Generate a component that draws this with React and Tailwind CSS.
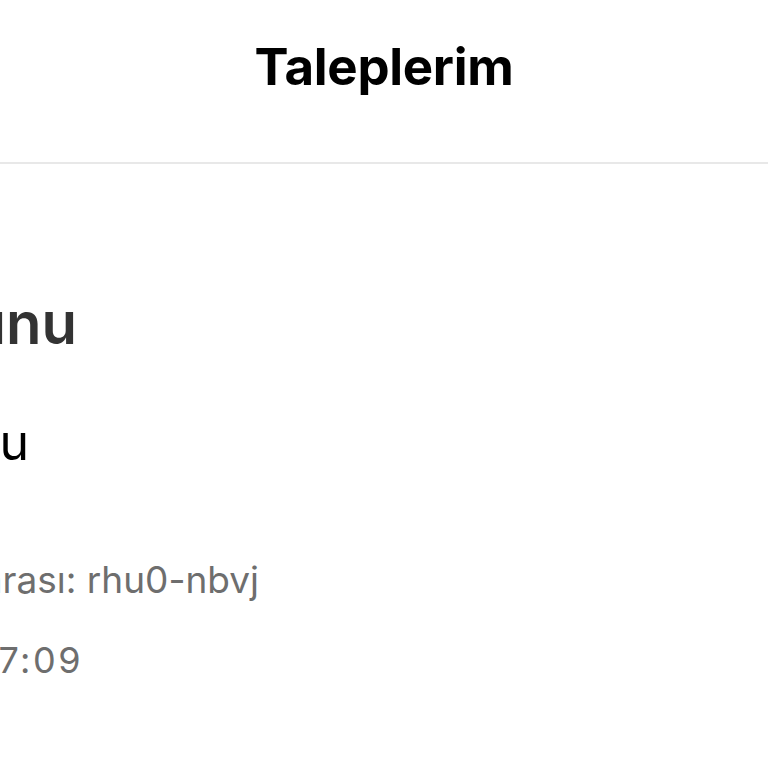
import React from "react";

function Line({ width, className, children }) {
  return (
    <div className={"flex justify-end " + width}>
      <span className={"whitespace-nowrap leading-none " + className}>{children}</span>
    </div>
  );
}

export default function App() {
  return (
    <div
      className="w-[768px] h-[768px] bg-white overflow-hidden"
      style={{ fontFamily: "Inter, 'Noto Sans', sans-serif" }}
    >
      <div className="h-[162px] flex justify-center pt-[41px]">
        <h1 className="text-[51px] font-bold leading-none text-black tracking-[-0.3px]">Taleplerim</h1>
      </div>
      <div className="h-[2px] bg-[#e8e8e8]" />

      <div className="flex flex-col">
        <div className="mt-[130px]">
          <Line width="w-[77px]" className="text-[58px] font-semibold text-[#333333]">
            Ödeme Sorunu
          </Line>
        </div>
        <div className="mt-[65px]">
          <Line width="w-[29px]" className="text-[50px] text-black">
            Talep açıklaması konu
          </Line>
        </div>
        <div className="mt-[94px]">
          <Line width="w-[259px]" className="text-[37px] text-[#6e6e6e]">
            Talep Numarası: rhu0-nbvj
          </Line>
        </div>
        <div className="mt-[44px]">
          <Line width="w-[83px]" className="text-[36px] text-[#6e6e6e] tracking-[2.5px]">
            12.05.2024 17:09
          </Line>
        </div>
      </div>
    </div>
  );
}
